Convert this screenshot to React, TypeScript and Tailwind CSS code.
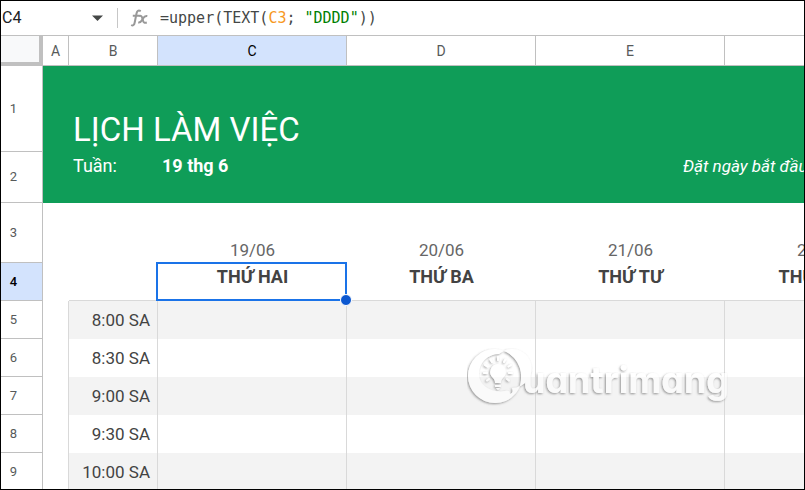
import React, { useState } from "react";

interface Day {
  date: string;
  name: string;
}

const days: Day[] = [
  { date: "19/06", name: "THỨ HAI" },
  { date: "20/06", name: "THỨ BA" },
  { date: "21/06", name: "THỨ TƯ" },
  { date: "22/06", name: "THỨ NĂM" },
];

const times = ["8:00 SA", "8:30 SA", "9:00 SA", "9:30 SA", "10:00 SA"];

const columns = ["A", "B", "C", "D", "E", "F"];

const FormulaBar: React.FC = () => {
  const [cell, setCell] = useState<string>("C4");

  return (
    <header className="flex h-[35px] items-center border-b border-[#c0c0c0] bg-white">
      <input
        aria-label="Name box"
        value={cell}
        onChange={(e) => setCell(e.target.value)}
        className="w-[86px] pl-px text-base text-[#202124] outline-none"
      />
      <button type="button" aria-label="Named ranges" className="w-5 shrink-0">
        <svg viewBox="0 0 20 12" className="h-3 w-5 fill-[#444746]">
          <path d="M5 3.5h11l-5.500 5.500z" />
        </svg>
      </button>
      <div className="ml-2.5 h-5 w-px shrink-0 bg-[#c7c7c7]" />
      <svg
        viewBox="0 0 20 20"
        className="ml-3 h-5 w-5 shrink-0 fill-none stroke-[#999999]"
        strokeWidth="2"
      >
        <path d="M10.800 3.200C8.300 1.800 7 3 6.500 5.500L4.700 14.500C4.300 17 3 18 1.200 17M2.800 7.800h6.500" />
        <path d="M9 8c2.200-.6 2.900.4 3.400 2.500l.6 2.300c.5 2 1.600 2.400 3.800 1.700" />
        <path d="M17.300 8c-2.300-.4-3.300.6-4.300 2.400l-.9 1.500c-1 1.800-2 2.900-3.900 2.600" />
      </svg>
      <div
        role="textbox"
        aria-label="Formula"
        contentEditable
        suppressContentEditableWarning
        className="ml-2.5 flex-1 whitespace-pre font-['DejaVu_Sans_Mono',monospace] text-[15px] leading-6 text-[#444746] outline-none"
      >
        =upper(TEXT(<span className="text-[#f7981d]">C3</span>;{" "}
        <span className="text-[#008000]">"DDDD"</span>))
      </div>
    </header>
  );
};

const RowHeader: React.FC<{ row: number; active?: boolean }> = ({
  row,
  active,
}) => (
  <th
    scope="row"
    className={
      active
        ? "border-r border-b border-[#c0c0c0] bg-[#d3e3fd] pr-4 text-[13px] font-medium text-black"
        : "border-r border-b border-[#c0c0c0] bg-white pr-4 text-[13px] font-normal text-[#575a5a]"
    }
  >
    {row}
  </th>
);

const Watermark: React.FC = () => (
  <div
    aria-hidden="true"
    className="pointer-events-none absolute top-[345px] left-[466px]"
  >
    <svg width="266" height="64" viewBox="0 0 266 64">
      <defs>
        {/* soft shadow kept outside the shape, with a half transparent face */}
        <filter id="emboss" x="-5%" y="-10%" width="110%" height="120%">
          <feGaussianBlur in="SourceAlpha" stdDeviation="1" />
          <feOffset dx="-1" dy="1" result="moved" />
          <feFlood floodColor="#555555" floodOpacity="0.6" />
          <feComposite in2="moved" operator="in" />
          <feComposite in2="SourceAlpha" operator="out" result="shadow" />
          <feComponentTransfer in="SourceGraphic" result="face">
            <feFuncA type="linear" slope="0.6" />
          </feComponentTransfer>
          <feMerge>
            <feMergeNode in="shadow" />
            <feMergeNode in="face" />
          </feMerge>
        </filter>
      </defs>
      <g filter="url(#emboss)" className="fill-white stroke-none">
        <path
          fillRule="evenodd"
          d="M28 3a27 27 0 1 0 0 54a27 27 0 0 0 21-10c3-4 5-8 5-15A27 27 0 0 0 28 3zM32 8a19.500 19.500 0 1 1 13 34c1 3 1 5-2 6c0-3-2-4-5-3c-10 2-26-3-26-17A19.500 19.500 0 0 1 32 8z"
        />
        <path d="M31 18a8 8 0 0 0-5 14c1.500 1.500 2 2.500 2 5h6c0-2.500.5-3.500 2-5a8 8 0 0 0-5-14zM28 39h6v2h-6zM29 42h4l-2 2z" />
        <path
          className="stroke-white"
          strokeWidth="2"
          strokeLinecap="round"
          d="M31 11v3M23.500 13.500l1.500 2.500M38.500 13.500l-1.500 2.500M18 19l2.500 1.500M44 19l-2.500 1.500M17 27h3M42 27h3M20 34.500l2-1.500M42 34.500l-2-1.500"
        />
        <text
          x="56"
          y="47"
          className="font-['Inter',sans-serif] text-[36px] font-bold [font-feature-settings:'cv11']"
        >
          uantrimang
        </text>
      </g>
    </svg>
  </div>
);

const App: React.FC = () => {
  return (
    <main className="relative h-screen overflow-hidden border border-black bg-white font-['Roboto',sans-serif]">
      <FormulaBar />
      <table className="w-[913px] table-fixed border-separate border-spacing-0">
        <colgroup>
          <col className="w-[42px]" />
          <col className="w-[26px]" />
          <col className="w-[89px]" />
          <col className="w-[189px]" />
          <col className="w-[189px]" />
          <col className="w-[189px]" />
          <col className="w-[189px]" />
        </colgroup>
        <thead>
          <tr className="h-[30px]">
            <td className="border-r-4 border-b-4 border-[#c0c0c0] bg-[#f8f9fa]" />
            {columns.map((column) => (
              <th
                key={column}
                scope="col"
                className={
                  column === "C"
                    ? "border-r border-b border-[#c0c0c0] bg-[#d3e3fd] text-sm font-normal text-black"
                    : "border-r border-b border-[#c0c0c0] text-sm font-normal text-[#575a5a]"
                }
              >
                {column}
              </th>
            ))}
          </tr>
        </thead>
        <tbody className="text-[#434343]">
          <tr className="h-[86px]">
            <RowHeader row={1} />
            <td className="bg-[#0f9d58]" />
            <td
              colSpan={5}
              className="bg-[#0f9d58] pl-1 align-bottom text-[33px] leading-[44px] text-white"
            >
              LỊCH LÀM VIỆC
            </td>
          </tr>
          <tr className="h-[51px] text-lg leading-7 text-white">
            <RowHeader row={2} />
            <td className="bg-[#0f9d58]" />
            <td className="bg-[#0f9d58] pl-1 align-top">Tuần:</td>
            <td className="bg-[#0f9d58] pl-1 align-top font-bold">19 thg 6</td>
            <td className="bg-[#0f9d58]" />
            <td
              colSpan={2}
              className="bg-[#0f9d58] pl-[147px] align-top text-[17px] leading-7 whitespace-nowrap italic"
            >
              Đặt ngày bắt đầu
            </td>
          </tr>
          <tr className="h-[60px]">
            <RowHeader row={3} />
            <td />
            <td />
            {days.map((day) => (
              <td
                key={day.date}
                className="pb-px text-center align-bottom text-[17px] leading-6 text-[#666666]"
              >
                {day.date}
              </td>
            ))}
          </tr>
          <tr className="h-[38px]">
            <RowHeader row={4} active />
            <td />
            <td className="border-b border-[#d9d9d9]" />
            {days.map((day, i) => (
              <td
                key={day.name}
                className="relative border-b border-[#d9d9d9] text-center align-top text-lg leading-7 font-bold"
              >
                {day.name}
                {i === 0 && (
                  <>
                    <div className="absolute -top-px right-0 -bottom-px -left-0.5 border-2 border-[#1a73e8]" />
                    <div className="absolute -right-[5px] -bottom-[6px] z-10 h-3 w-3 rounded-full border border-white bg-[#0b57d0]" />
                  </>
                )}
              </td>
            ))}
          </tr>
          {times.map((time, i) => (
            <tr
              key={time}
              className={i % 2 === 0 ? "h-[38px] bg-[#f3f3f3]" : "h-[38px]"}
            >
              <RowHeader row={i + 5} />
              <td className="border-r border-[#d9d9d9] bg-white" />
              <td className="border-r border-[#d9d9d9] pt-0.5 pr-[7px] text-right text-[17px]">
                {time}
              </td>
              {days.map((day) => (
                <td key={day.date} className="border-r border-[#d9d9d9]" />
              ))}
            </tr>
          ))}
        </tbody>
      </table>
      <Watermark />
    </main>
  );
};

export default App;
